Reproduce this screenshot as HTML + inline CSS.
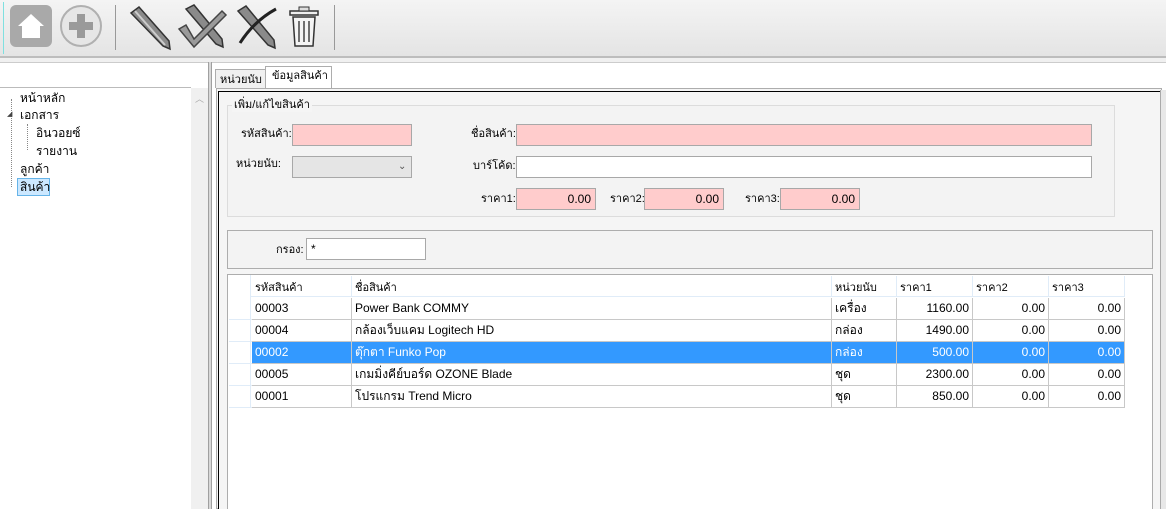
<!DOCTYPE html>
<html><head><meta charset="utf-8">
<style>
*{box-sizing:border-box;margin:0;padding:0}
body{width:1166px;height:509px;overflow:hidden;background:#f0f0f0;font-family:"Liberation Sans","DejaVu Sans",sans-serif;font-size:12px;color:#000;position:relative}
.a{position:absolute}
.t{position:absolute;white-space:nowrap;font-size:12px;line-height:14px}
.inp{position:absolute;border:1px solid #a8a8a8;background:#fff;height:22px;font-size:12px;line-height:20px;padding:0 4px}
.pink{background:#ffcccc}
.r{text-align:right}
.cell{position:absolute;height:22px;line-height:21px;font-size:12px;padding:0 3px;border-right:1px solid #c8c8c8;border-bottom:1px solid #c8c8c8;white-space:nowrap;overflow:hidden}
.rh{position:absolute;left:-23px;width:23px;height:22px;border-bottom:1px solid #e0ecf8}
</style></head><body>
<!-- toolbar -->
<div class="a" style="left:0;top:0;width:1166px;height:58px;background:linear-gradient(#f4f4f4,#e4e4e4);border-bottom:2px solid #bdbdbd"></div>
<div class="a" style="left:3px;top:2px;width:1px;height:52px;background:#7fe0e0"></div>
<div class="a" style="left:10px;top:5px;width:42px;height:42px;background:#a9a9a9;border-radius:6px"></div>
<svg class="a" style="left:10px;top:5px" width="42" height="42"><path d="M21 9 L34 21 L30 21 L30 33 L12 33 L12 21 L8 21 Z" fill="#fff"/></svg>
<svg class="a" style="left:58px;top:3px" width="46" height="46"><circle cx="23" cy="23" r="20" fill="#e6e6e6" stroke="#b0b0b0" stroke-width="2"/><rect x="19" y="11" width="8" height="24" fill="#9a9a9a"/><rect x="11" y="19" width="24" height="8" fill="#9a9a9a"/></svg>
<div class="a" style="left:115px;top:5px;width:1px;height:45px;background:#999"></div>
<svg class="a" style="left:125px;top:3px" width="50" height="48"><path d="M6 10 L14 4 L44 38 L45 46 L38 43 Z" fill="#8a8a8a" stroke="#333" stroke-width="1.5"/><path d="M10 8 L40 42" stroke="#ccc" stroke-width="2"/></svg>
<svg class="a" style="left:176px;top:3px" width="52" height="48"><path d="M10 6 L18 2 L46 36 L47 44 L40 41 Z" fill="#8a8a8a" stroke="#333" stroke-width="1.5"/><path d="M3 26 L10 22 L18 36 L46 8 L50 12 L18 44 Z" fill="#9a9a9a" stroke="#444" stroke-width="1.5"/></svg>
<svg class="a" style="left:230px;top:3px" width="52" height="48"><path d="M8 8 L16 3 L44 37 L45 45 L38 42 Z" fill="#8a8a8a" stroke="#333" stroke-width="1.5"/><path d="M10 40 Q24 18 46 6" stroke="#222" stroke-width="3" fill="none"/></svg>
<svg class="a" style="left:287px;top:5px" width="34" height="44"><rect x="3" y="6" width="28" height="4" fill="#eee" stroke="#333" stroke-width="1.5"/><rect x="12" y="2" width="10" height="4" fill="#ddd" stroke="#333"/><path d="M6 12 L28 12 L26 41 L8 41 Z" fill="#f4f4f4" stroke="#333" stroke-width="1.5"/><path d="M12 16 V37 M17 16 V37 M22 16 V37" stroke="#444" stroke-width="1.5"/></svg>
<div class="a" style="left:334px;top:5px;width:1px;height:45px;background:#999"></div>
<!-- left panel -->
<div class="a" style="left:0;top:62px;width:208px;height:447px;background:#fff;border-top:1px solid #ccc"></div>
<div class="a" style="left:0;top:87px;width:191px;height:422px;background:#fff;border-top:1px solid #bbb"></div>
<div class="a" style="left:191px;top:88px;width:17px;height:421px;background:#f0f0f0"></div>
<div class="t" style="left:195px;top:92px;color:#aaa;font-size:9px">︿</div>
<div class="a" style="left:208px;top:62px;width:4px;height:447px;background:#d8d8d8;border-left:1px solid #a0a0a0;border-right:1px solid #a0a0a0"></div>
<div class="a" style="left:11px;top:99px;width:0;height:88px;border-left:1px dotted #888"></div>
<div class="a" style="left:27px;top:124px;width:0;height:26px;border-left:1px dotted #888"></div>
<div class="t" style="left:20px;top:91px">หน้าหลัก</div>
<div class="t" style="left:7px;top:108px;font-size:7px;color:#444">◢</div>
<div class="t" style="left:20px;top:108px">เอกสาร</div>
<div class="t" style="left:36px;top:126px">อินวอยซ์</div>
<div class="t" style="left:36px;top:144px">รายงาน</div>
<div class="t" style="left:20px;top:162px">ลูกค้า</div>
<div class="a" style="left:17px;top:178px;width:33px;height:18px;background:#cce8ff;border:1px solid #66b4e8"></div>
<div class="t" style="left:20px;top:180px">สินค้า</div>
<!-- tabs -->
<div class="a" style="left:212px;top:62px;width:954px;height:447px;background:#fff;border-top:1px solid #ccc"></div>
<div class="a" style="left:215px;top:69px;width:51px;height:19px;background:#f0f0f0;border:1px solid #adadad;border-bottom:none"></div>
<div class="t" style="left:220px;top:73px;font-size:11px">หน่วยนับ</div>
<div class="a" style="left:265px;top:66px;width:67px;height:23px;background:#fff;border:1px solid #adadad;border-bottom:none"></div>
<div class="t" style="left:272px;top:69px;font-size:11px">ข้อมูลสินค้า</div>
<div class="a" style="left:216px;top:88px;width:946px;height:421px;border:1px solid #adadad;background:#f5f5f5"></div>
<div class="a" style="left:218px;top:91px;width:942px;height:418px;border-top:1px solid #000;border-left:1px solid #000;background:#f5f5f5"></div>
<div class="a" style="left:1160px;top:90px;width:6px;height:419px;background:#e8e8e8;border-left:1px solid #aaa"></div>
<!-- group box -->
<div class="a" style="left:227px;top:105px;width:888px;height:112px;border:1px solid #dcdcdc;background:#f3f3f3"></div>
<div class="t" style="left:232px;top:98px;background:#f5f5f5;padding:0 2px;font-size:11px">เพิ่ม/แก้ไขสินค้า</div>
<div class="t" style="left:241px;top:127px;font-size:11px">รหัสสินค้า:</div>
<div class="inp pink" style="left:292px;top:124px;width:120px"></div>
<div class="t" style="left:236px;top:157px;font-size:11px">หน่วยนับ:</div>
<div class="inp" style="left:292px;top:156px;width:120px;background:#e5e5e5"></div>
<div class="t" style="left:398px;top:160px;font-size:10px;color:#555">⌄</div>
<div class="t" style="left:471px;top:127px;font-size:11px">ชื่อสินค้า:</div>
<div class="inp pink" style="left:516px;top:124px;width:576px"></div>
<div class="t" style="left:473px;top:159px;font-size:11px">บาร์โค้ด:</div>
<div class="inp" style="left:516px;top:156px;width:576px"></div>
<div class="t" style="left:481px;top:192px;font-size:11px">ราคา1:</div>
<div class="inp pink r" style="left:516px;top:188px;width:80px">0.00</div>
<div class="t" style="left:610px;top:192px;font-size:11px">ราคา2:</div>
<div class="inp pink r" style="left:644px;top:188px;width:80px">0.00</div>
<div class="t" style="left:745px;top:192px;font-size:11px">ราคา3:</div>
<div class="inp pink r" style="left:780px;top:188px;width:80px">0.00</div>
<!-- filter -->
<div class="a" style="left:227px;top:230px;width:926px;height:39px;border:1px solid #adadad;background:#f3f3f3"></div>
<div class="t" style="left:276px;top:243px;font-size:11px">กรอง:</div>
<div class="inp" style="left:306px;top:238px;width:120px">*</div>
<!-- grid -->
<div class="a" style="left:227px;top:274px;width:926px;height:235px;border:1px solid #adadad;border-bottom:none;background:#fff"></div>
<div class="a" style="left:228px;top:275px;width:896px;height:22px;background:#fff;border-bottom:1px solid #e0ecf8"></div>
<div class="a" style="left:228px;top:275px;width:23px;height:133px;background:#fff;border-right:1px solid #e0ecf8"></div>
<div class="t" style="left:255px;top:281px;font-size:11px">รหัสสินค้า</div>
<div class="t" style="left:355px;top:281px;font-size:11px">ชื่อสินค้า</div>
<div class="t" style="left:835px;top:281px;font-size:11px">หน่วยนับ</div>
<div class="t" style="left:900px;top:281px;font-size:11px">ราคา1</div>
<div class="t" style="left:976px;top:281px;font-size:11px">ราคา2</div>
<div class="t" style="left:1052px;top:281px;font-size:11px">ราคา3</div>
<div class="a" style="left:351px;top:276px;width:1px;height:21px;background:#e0ecf8"></div>
<div class="a" style="left:831px;top:276px;width:1px;height:21px;background:#e0ecf8"></div>
<div class="a" style="left:896px;top:276px;width:1px;height:21px;background:#e0ecf8"></div>
<div class="a" style="left:972px;top:276px;width:1px;height:21px;background:#e0ecf8"></div>
<div class="a" style="left:1048px;top:276px;width:1px;height:21px;background:#e0ecf8"></div>
<div class="a" style="left:1124px;top:276px;width:1px;height:21px;background:#e0ecf8"></div>

<div class="a" style="left:252px;top:298px">
<div class="rh" style="top:0"></div><div class="rh" style="top:22px"></div><div class="rh" style="top:44px"></div><div class="rh" style="top:66px"></div><div class="rh" style="top:88px"></div>
<div class="cell" style="left:0;top:0;width:100px">00003</div><div class="cell" style="left:100px;top:0;width:480px">Power Bank COMMY</div><div class="cell" style="left:580px;top:0;width:65px">เครื่อง</div><div class="cell r" style="left:645px;top:0;width:76px">1160.00</div><div class="cell r" style="left:721px;top:0;width:76px">0.00</div><div class="cell r" style="left:797px;top:0;width:76px">0.00</div>
<div class="cell" style="left:0;top:22px;width:100px">00004</div><div class="cell" style="left:100px;top:22px;width:480px">กล้องเว็บแคม Logitech HD</div><div class="cell" style="left:580px;top:22px;width:65px">กล่อง</div><div class="cell r" style="left:645px;top:22px;width:76px">1490.00</div><div class="cell r" style="left:721px;top:22px;width:76px">0.00</div><div class="cell r" style="left:797px;top:22px;width:76px">0.00</div>
<div class="cell" style="left:0;top:44px;width:100px;background:#3399ff;color:#fff">00002</div><div class="cell" style="left:100px;top:44px;width:480px;background:#3399ff;color:#fff">ตุ๊กตา Funko Pop</div><div class="cell" style="left:580px;top:44px;width:65px;background:#3399ff;color:#fff">กล่อง</div><div class="cell r" style="left:645px;top:44px;width:76px;background:#3399ff;color:#fff">500.00</div><div class="cell r" style="left:721px;top:44px;width:76px;background:#3399ff;color:#fff">0.00</div><div class="cell r" style="left:797px;top:44px;width:76px;background:#3399ff;color:#fff">0.00</div>
<div class="cell" style="left:0;top:66px;width:100px">00005</div><div class="cell" style="left:100px;top:66px;width:480px">เกมมิ่งคีย์บอร์ด OZONE Blade</div><div class="cell" style="left:580px;top:66px;width:65px">ชุด</div><div class="cell r" style="left:645px;top:66px;width:76px">2300.00</div><div class="cell r" style="left:721px;top:66px;width:76px">0.00</div><div class="cell r" style="left:797px;top:66px;width:76px">0.00</div>
<div class="cell" style="left:0;top:88px;width:100px">00001</div><div class="cell" style="left:100px;top:88px;width:480px">โปรแกรม Trend Micro</div><div class="cell" style="left:580px;top:88px;width:65px">ชุด</div><div class="cell r" style="left:645px;top:88px;width:76px">850.00</div><div class="cell r" style="left:721px;top:88px;width:76px">0.00</div><div class="cell r" style="left:797px;top:88px;width:76px">0.00</div>
</div>
</body></html>
